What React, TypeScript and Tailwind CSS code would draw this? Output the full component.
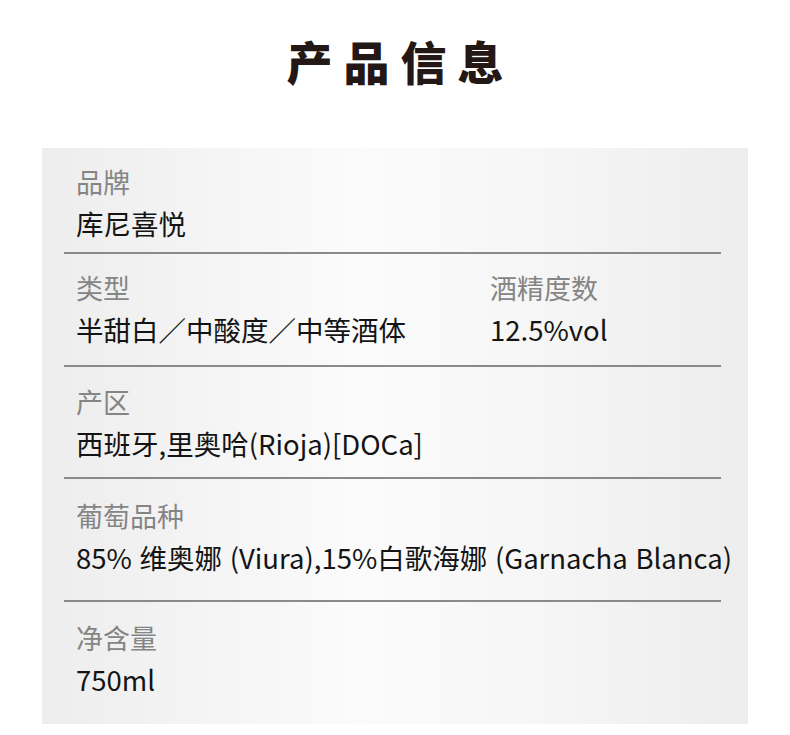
import React from "react";

const font = { fontFamily: '"Noto Sans CJK SC", "Noto Sans", sans-serif' };

function Divider({ mt, mb }: { mt: string; mb: string }) {
  return <div className={`ml-[22px] w-[657px] h-[2px] bg-[#8a8a8a] ${mt} ${mb}`} />;
}

function Label({ children }: { children: React.ReactNode }) {
  return <div className="h-[36px] leading-[36px] text-[27px] text-[#858585] whitespace-nowrap">{children}</div>;
}

function Value({ children, extra = "" }: { children: React.ReactNode; extra?: string }) {
  return <div className={`h-[36px] leading-[36px] text-[27.5px] text-[#141414] mt-[5px] mb-[1px] whitespace-nowrap ${extra}`}>{children}</div>;
}

export default function App() {
  return (
    <div className="w-[790px] h-[735px] bg-white relative overflow-hidden" style={font}>
      <div className="pt-[30px] h-[148px] flex justify-center">
        <div className="h-[60px] leading-[60px] text-[46px] font-black tracking-[11px] text-[#231815] pl-[11px]">产品信息</div>
      </div>
      <div className="ml-[42px] w-[706px] h-[576px] bg-[linear-gradient(to_right,#ededed,#fbfbfb_45%,#f6f6f6_70%,#ededed)]">
        <div className="pl-[34px] pt-[16px]">
          <Label>品牌</Label>
          <Value>库尼喜悦</Value>
        </div>
        <Divider mt="mt-[11px]" mb="mb-[16px]" />
        <div className="pl-[34px] flex">
          <div className="w-[414px]">
            <Label>类型</Label>
            <Value>半甜白／中酸度／中等酒体</Value>
          </div>
          <div>
            <Label>酒精度数</Label>
            <Value>12.5%vol</Value>
          </div>
        </div>
        <Divider mt="mt-[17px]" mb="mb-[17px]" />
        <div className="pl-[34px]">
          <Label>产区</Label>
          <Value>西班牙,里奥哈(Rioja)[DOCa]</Value>
        </div>
        <Divider mt="mt-[16px]" mb="mb-[19px]" />
        <div className="pl-[34px]">
          <Label>葡萄品种</Label>
          <Value extra="[word-spacing:1.5px]">85% 维奥娜 (Viura),15%白歌海娜 (Garnacha Blanca)</Value>
        </div>
        <Divider mt="mt-[25px]" mb="mb-[18px]" />
        <div className="pl-[34px]">
          <Label>净含量</Label>
          <Value>750ml</Value>
        </div>
      </div>
    </div>
  );
}
